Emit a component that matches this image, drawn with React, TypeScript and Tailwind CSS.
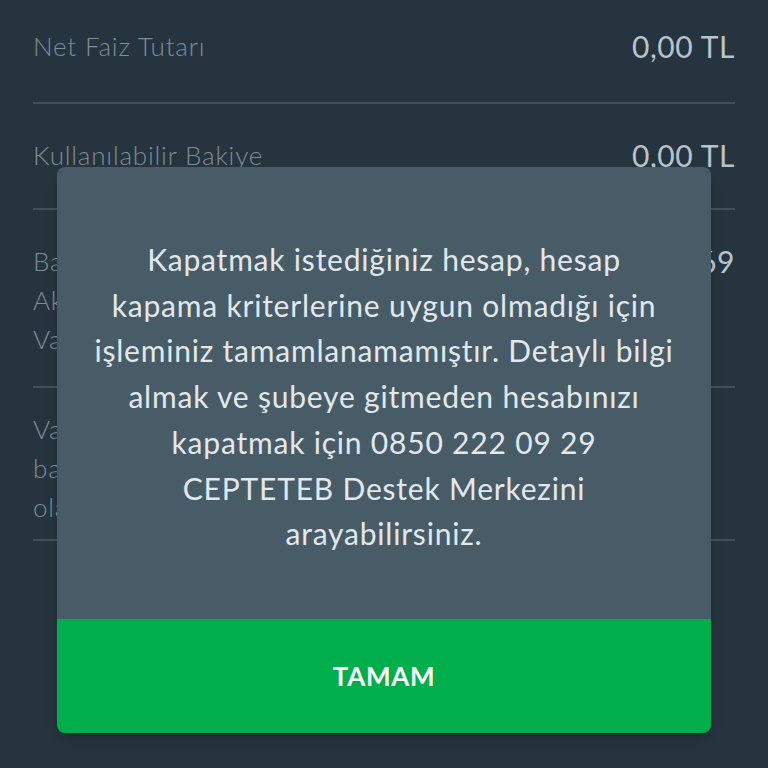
import React from 'react';

type Row = {
  label: string[];
  value: string;
  pad: string;
};

const rows: Row[] = [
  { label: ['Net Faiz Tutarı'], value: '0,00 TL', pad: 'pt-[31px] pb-[36px]' },
  { label: ['Kullanılabilir Bakiye'], value: '0,00 TL', pad: 'pt-[32px] pb-[33px]' },
  { label: ['Bağlı Hesap', 'Akıllı Hesap', 'Vadeli Hesap No'], value: '1234569', pad: 'pt-[32px] pb-[27px]' },
  { label: ['Vade sonunda', 'bakiye aktarılacak', 'olan hesap'], value: '', pad: 'pt-[22px] pb-[12px]' },
];

export default function App() {
  return (
    <div className="relative h-[768px] w-[768px] overflow-hidden bg-[#25343e] font-['Lato',sans-serif]">
      {/* arka plandaki hesap detay listesi */}
      <div className="-mt-[4px] px-[33px]">
        {rows.map((row, i) => (
          <div key={i}>
            <div className={`flex items-start justify-between ${row.pad}`}>
              <div className="text-[26px] font-light leading-[39px] tracking-[0.8px] text-[#7f8d96]">
                {row.label.map((l) => (
                  <div key={l}>{l}</div>
                ))}
              </div>
              <div className="text-[30px] leading-[39px] tracking-[0.6px] text-[#b9c3c9]">{row.value}</div>
            </div>
            <div className="h-[2px] bg-[#41505a]" />
          </div>
        ))}
      </div>

      {/* uyarı penceresi */}
      <div className="absolute left-[57px] top-[167px] flex h-[566px] w-[654px] flex-col overflow-hidden rounded-lg shadow-lg">
        <div className="flex-1 bg-[#485c68] px-4 pt-[70px] text-center text-[30px] leading-[45.7px] tracking-[0.8px] text-[#e2e8eb]">
          Kapatmak istediğiniz hesap, hesap
          <br />
          kapama kriterlerine uygun olmadığı için
          <br />
          işleminiz tamamlanamamıştır. Detaylı bilgi
          <br />
          almak ve şubeye gitmeden hesabınızı
          <br />
          kapatmak için 0850 222 09 29
          <br />
          CEPTETEB Destek Merkezini
          <br />
          arayabilirsiniz.
        </div>
        <button className="flex h-[114px] items-center justify-center bg-[#00ae4b] text-[26px] font-bold tracking-wide text-white">
          TAMAM
        </button>
      </div>
    </div>
  );
}
